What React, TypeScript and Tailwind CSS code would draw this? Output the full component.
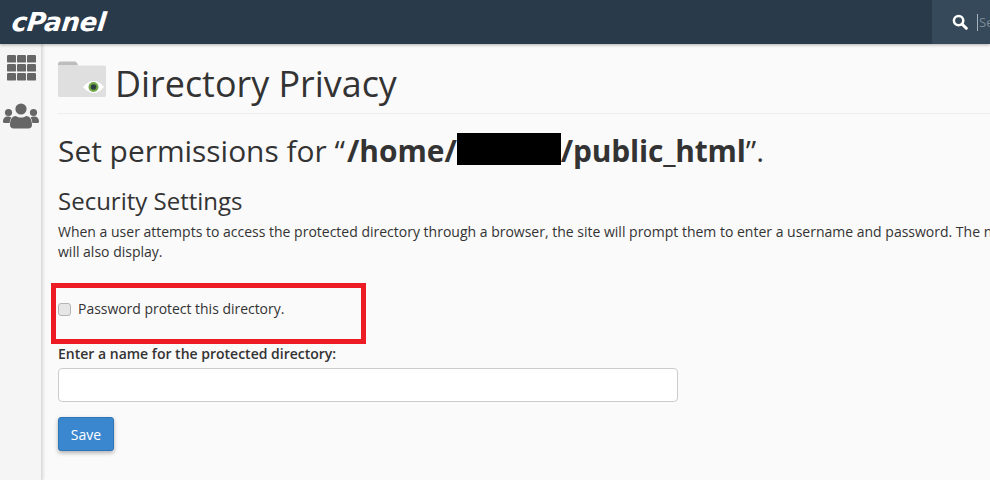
import React from "react";

const Grid = () => (
  <svg width="29" height="26" viewBox="0 0 29 26" className="block">
    {[0, 1, 2].map((r) =>
      [0, 1, 2].map((c) => <rect key={`${r}${c}`} x={c * 10} y={r * 9} width="9" height="7.6" rx="1.2" fill="#666" />)
    )}
  </svg>
);

const Users = () => (
  <svg width="36" height="26" viewBox="0 0 36 26" className="block">
    <circle cx="18" cy="6" r="5.6" fill="#666" />
    <circle cx="5.5" cy="9.5" r="3.6" fill="#666" />
    <circle cx="30.5" cy="9.5" r="3.6" fill="#666" />
    <path d="M0 19c0-4 2-5.5 5-5.5 1.5 0 2.5.5 3.5 1.2-1.2 1.2-1.8 3-1.8 5.3H2c-1.2 0-2-.6-2-1Z" fill="#666" />
    <path d="M36 19c0-4-2-5.5-5-5.5-1.500 0-2.500.5-3.500 1.200 1.200 1.200 1.800 3 1.800 5.300H34c1.200 0 2-.6 2-1Z" fill="#666" />
    <path d="M7 22c0-6 2.500-9 6-9 1.500 1 3 1.500 5 1.500s3.500-.5 5-1.500c3.500 0 6 3 6 9 0 2-1.500 3.500-3.500 3.500h-15C8.500 25.500 7 24 7 22Z" fill="#666" />
  </svg>
);

const FolderEye = () => (
  <svg width="48" height="36" viewBox="0 0 48 36" className="block">
    <path d="M0 3c0-1.500 1-2.500 2.500-2.500h14c1.500 0 2.500 1 3 2.500l.5 1.500H0Z" fill="#bdbdbd" />
    <rect x="0" y="4.500" width="48" height="31.500" rx="1.500" fill="#dfdfdf" />
    <path d="M25 26c3.500-4.200 7-6 10.500-6S42.500 21.800 46 26c-3.500 4.200-7 6-10.500 6S28.500 30.200 25 26Z" fill="#fff" />
    <circle cx="35.500" cy="26" r="5" fill="#73a84a" />
    <circle cx="35.500" cy="26" r="2.800" fill="#2c3e3f" />
  </svg>
);

export default function App() {
  return (
    <div className="relative h-[480px] w-[990px] overflow-hidden bg-[#fafafa] font-['Open_Sans',sans-serif] text-[#333]">
      <header className="relative z-10 flex h-11 items-center justify-between bg-[#293a4a] shadow-[0_1px_3px_rgba(0,0,0,0.3)]">
        <span className="ml-[12px] -skew-x-6 font-['DejaVu_Sans',sans-serif] text-[26px] font-bold italic leading-none tracking-[-0.2px] text-white">
          cPanel
        </span>
        <div className="flex h-11 w-[58px] items-center bg-[#36495a] pl-[20px]">
          <svg width="16" height="16" viewBox="0 0 16 16" className="shrink-0">
            <circle cx="6.600" cy="6.600" r="4.700" fill="none" stroke="#fff" strokeWidth="2.500" />
            <path d="M10.200 10.200 14.300 14.300" stroke="#fff" strokeWidth="3" strokeLinecap="round" />
          </svg>
          <span className="ml-[9px] h-[17px] w-[13px] overflow-hidden border-l border-[#aab4bd] pl-px text-[13px] leading-[17px] text-[#7d8b98]">Se</span>
        </div>
      </header>
      <div className="flex h-[436px]">
        <aside className="flex w-[42px] shrink-0 flex-col items-center border-r border-[#dcdcdc] bg-[#f5f5f5] pl-[1px] pt-[11px] shadow-[1px_0_3px_rgba(0,0,0,0.15)]">
          <Grid />
          <div className="mt-[22px]"><Users /></div>
        </aside>
        <main className="min-w-0 flex-1 pl-[16px]">
          <div className="flex h-[70px] items-end border-b border-[#eee] pb-[4px]">
            <div className="mb-[12px]"><FolderEye /></div>
            <h1 className="ml-[9px] whitespace-nowrap text-[35.9px] leading-[50px]">Directory Privacy</h1>
          </div>
          <h2 className="mt-[16px] flex h-[42px] items-center whitespace-nowrap text-[29.9px]">
            <span className="mr-[2px]">Set permissions for “</span>
            <b className="font-bold">/home/</b>
            <span className="-mt-[4px] h-[32px] w-[104px] bg-black" />
            <b className="font-bold tracking-[-0.15px]">/public_html</b>
            <span>”.</span>
          </h2>
          <h3 className="mt-[13px] text-[24px] leading-[32px]">Security Settings</h3>
          <p className="mt-[5px] w-[932px] overflow-hidden whitespace-nowrap text-[14px] leading-[20px]">
            When a user attempts to access the protected directory through a browser, the site will prompt them to enter a username and password. The n
            <br />
            will also display.
          </p>
          <label className="mt-[37px] flex h-[20px] items-center">
            <input type="checkbox" className="h-[13px] w-[13px] appearance-none rounded-[3px] border border-[#b5b5b5] bg-[#e6e6e6]" />
            <span className="ml-[7px] text-[13.95px]">Password protect this directory.</span>
          </label>
          <div className="mt-[25px] text-[14px] font-semibold leading-[20px]">Enter a name for the protected directory:</div>
          <input type="text" className="mt-[4px] block h-[34px] w-[620px] rounded border border-[#ccc] bg-white" />
          <button className="mt-[15px] block h-[34px] w-[56px] rounded-[3px] border border-[#2e75b5] bg-[#3a87cf] text-[14px] text-white shadow-[0_2px_4px_rgba(0,0,0,0.3)]">
            Save
          </button>
        </main>
      </div>
      <div className="absolute left-[51px] top-[283px] h-[61px] w-[315px] border-[5px] border-[#ed1c24]" />
    </div>
  );
}
